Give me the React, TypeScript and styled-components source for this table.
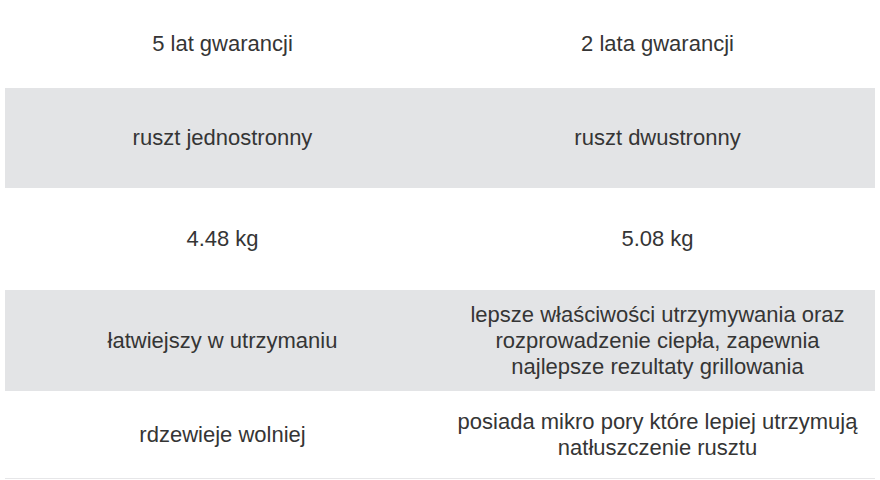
import styled, { createGlobalStyle } from "styled-components";

const GlobalStyle = createGlobalStyle`
  body {
    margin: 0;
    background: #ffffff;
    font-family: "Liberation Sans", Arial, sans-serif;
  }
`;

const Table = styled.div`
  margin: 0 5px;
  width: 870px;
  display: grid;
  grid-template-columns: 1fr 1fr;
  border-bottom: 1px solid #e6e6e8;
`;

const Row = styled.div<{ $striped?: boolean; $height: number }>`
  display: contents;

  & > div {
    height: ${(p) => p.$height}px;
    background: ${(p) => (p.$striped ? "#e3e4e6" : "#ffffff")};
  }
`;

const Cell = styled.div`
  display: flex;
  align-items: center;
  justify-content: center;
  padding: 0 12px;
  text-align: center;
  font-size: 22px;
  line-height: 26px;
  color: #353535;
`;

const rows = [
  { left: "5 lat gwarancji", right: "2 lata gwarancji", height: 88 },
  { left: "ruszt jednostronny", right: "ruszt dwustronny", height: 100 },
  { left: "4.48 kg", right: "5.08 kg", height: 102 },
  {
    left: "łatwiejszy w utrzymaniu",
    right:
      "lepsze właściwości utrzymywania oraz rozprowadzenie ciepła, zapewnia najlepsze rezultaty grillowania",
    height: 101,
  },
  {
    left: "rdzewieje wolniej",
    right: "posiada mikro pory które lepiej utrzymują natłuszczenie rusztu",
    height: 87,
  },
];

const App = () => {
  return (
    <>
      <GlobalStyle />
      <Table>
        {rows.map((r, i) => (
          <Row key={i} $striped={i % 2 === 1} $height={r.height}>
            <Cell>{r.left}</Cell>
            <Cell>{r.right}</Cell>
          </Row>
        ))}
      </Table>
    </>
  );
};

export default App;
